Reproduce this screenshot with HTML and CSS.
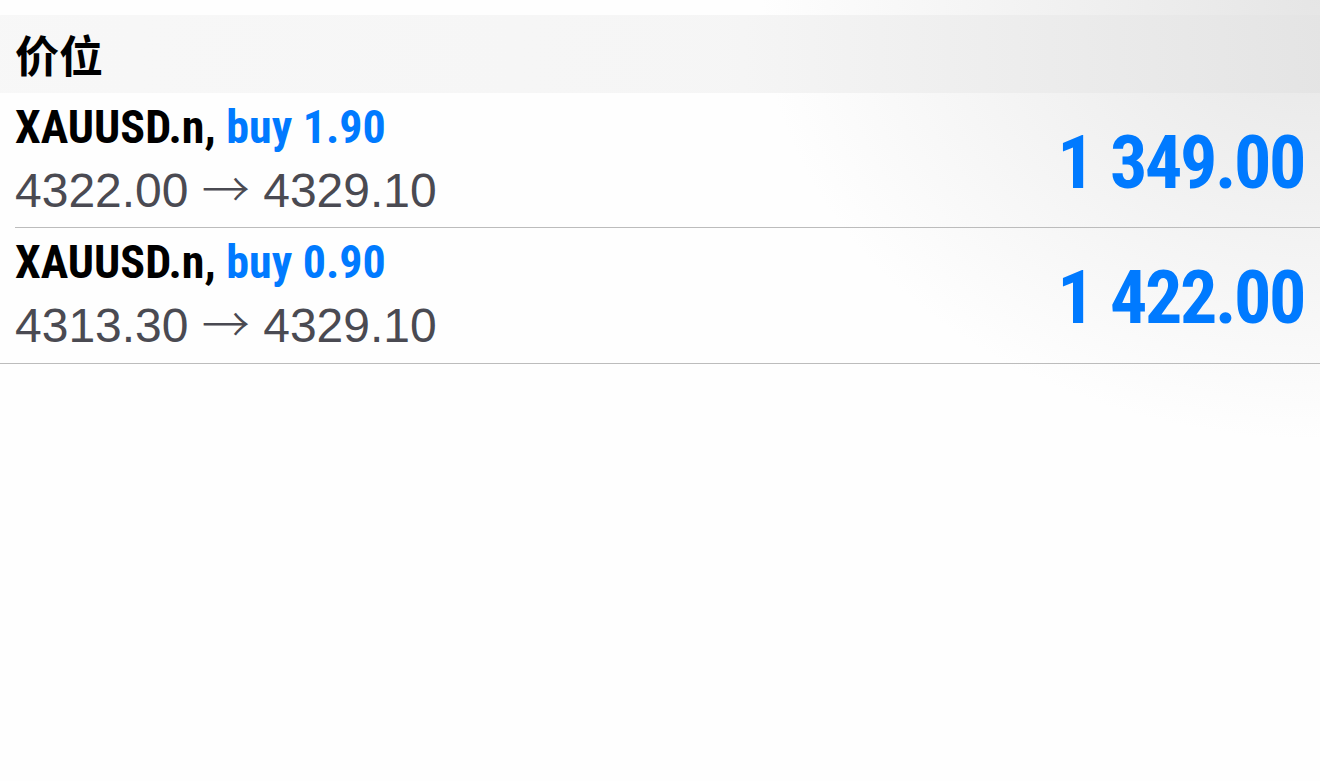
FILE: index.html
```html
<!DOCTYPE html>
<html lang="zh">
<head>
<meta charset="utf-8">
<link rel="stylesheet" href="styles.css">
</head>
<body>
<div class="page">
  <div class="header"><span class="title">价位</span></div>
  <div class="list">
    <div class="row">
      <div class="info">
        <div class="name">XAUUSD.n, <span class="side">buy 1.90</span></div>
        <div class="prices">4322.00 <span class="arrow">→</span> 4329.10</div>
      </div>
      <div class="profit">1 349.00</div>
    </div>
    <div class="row last">
      <div class="info">
        <div class="name">XAUUSD.n, <span class="side">buy 0.90</span></div>
        <div class="prices">4313.30 <span class="arrow">→</span> 4329.10</div>
      </div>
      <div class="profit">1 422.00</div>
    </div>
  </div>
</div>
</body>
</html>
```
FILE: styles.css
```css
html, body {
  margin: 0;
  padding: 0;
  height: 100%;
}
body {
  background:
    radial-gradient(ellipse 560px 440px at 100% 0%, rgba(205,205,205,0.5), rgba(255,255,255,0) 100%),
    #fefefe;
  font-family: "Liberation Sans", Arial, "Noto Sans CJK SC", sans-serif;
}
.page {
  padding-top: 15px;
}
.header {
  height: 78px;
  display: flex;
  align-items: center;
  padding-left: 15px;
  background: linear-gradient(90deg, rgba(247,247,247,0.95) 0%, rgba(245,245,245,0.95) 55%, rgba(228,228,228,0.95) 100%);
}
.title {
  font-family: "Noto Sans CJK SC", sans-serif;
  font-weight: 700;
  font-size: 44px;
  color: #000;
  line-height: 1;
}
.row {
  display: flex;
  align-items: flex-start;
  justify-content: space-between;
  height: 134px;
  margin-left: 15px;
  padding-right: 16px;
  border-bottom: 1px solid #bcbcbc;
}
.row.last {
  margin-left: 0;
  padding-left: 15px;
  height: 135px;
}
.info {
  display: flex;
  flex-direction: column;
  padding-top: 9px;
}
.name {
  font-family: Roboto, "Liberation Sans", sans-serif;
  font-stretch: 75%;
  font-weight: 700;
  font-size: 46px;
  line-height: 50px;
  color: #000;
  white-space: nowrap;
}
.side {
  color: #007aff;
}
.prices {
  margin-top: 7px;
  font-family: "Liberation Sans", Arial, sans-serif;
  font-size: 48px;
  line-height: 54px;
  color: #4a4a52;
  white-space: nowrap;
}
.arrow {
  font-family: "Noto Sans CJK SC", sans-serif;
  font-weight: 300;
}
.profit {
  margin-top: 33px;
  font-family: Roboto, "Liberation Sans", sans-serif;
  font-stretch: 75%;
  font-weight: 700;
  font-size: 74px;
  line-height: 74px;
  letter-spacing: -2.4px;
  word-spacing: 3px;
  color: #007aff;
  white-space: nowrap;
}
```
